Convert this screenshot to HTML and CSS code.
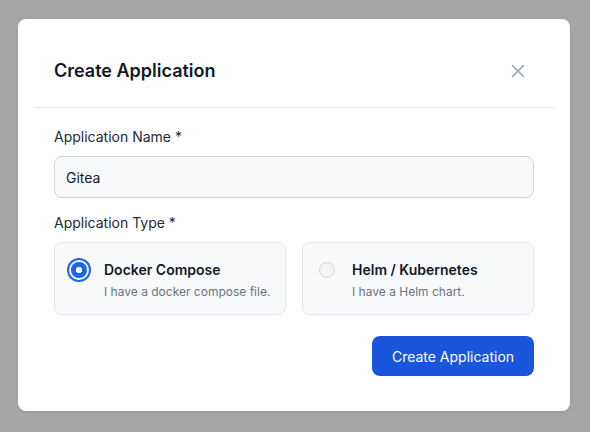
FILE: index.html
```html
<!DOCTYPE html>
<html lang="en">
<head>
<meta charset="utf-8">
<title>Create Application</title>
<link rel="stylesheet" href="styles.css">
</head>
<body>
<div class="dialog">
  <div class="header">
    <h2 class="title">Create Application</h2>
    <button class="close" aria-label="Close">
      <svg width="14" height="14" viewBox="0 0 14 14" fill="none" stroke="#9ca3af" stroke-width="1.6" stroke-linecap="round"><path d="M1.5 1.5 L12.5 12.5 M12.5 1.5 L1.5 12.5"/></svg>
    </button>
  </div>
  <div class="divider"></div>
  <div class="body">
    <label class="label">Application Name *</label>
    <div class="input">Gitea</div>
    <label class="label type-label">Application Type *</label>
    <div class="options">
      <div class="card">
        <span class="radio checked"></span>
        <div class="card-text">
          <div class="card-title">Docker Compose</div>
          <div class="card-desc">I have a docker compose file.</div>
        </div>
      </div>
      <div class="card">
        <span class="radio"></span>
        <div class="card-text">
          <div class="card-title">Helm / Kubernetes</div>
          <div class="card-desc">I have a Helm chart.</div>
        </div>
      </div>
    </div>
    <div class="actions">
      <button class="primary">Create Application</button>
    </div>
  </div>
</div>
</body>
</html>
```
FILE: styles.css
```css
* { box-sizing: border-box; }
html, body { margin: 0; padding: 0; }
body {
  background: #a6a6a6;
  font-family: Inter, "Noto Sans", sans-serif;
  width: 590px;
  height: 432px;
  padding: 19px 20px 0 18px;
}
.dialog {
  width: 552px;
  height: 392px;
  background: #ffffff;
  border-radius: 8px;
  box-shadow: 0 1px 3px rgba(0,0,0,0.12);
}
.header {
  display: flex;
  align-items: center;
  justify-content: space-between;
  height: 88px;
  padding: 38px 36px 22px 36px;
}
.title {
  margin: 0;
  font-size: 18px;
  line-height: 28px;
  font-weight: 600;
  color: #111827;
}
.close {
  width: 32px;
  height: 28px;
  border: 0;
  background: transparent;
  padding: 0;
  display: flex;
  align-items: center;
  justify-content: center;
}
.divider {
  height: 1px;
  background: #e5e7eb;
  margin: 0 16px;
}
.body {
  padding: 19px 36px 35px 36px;
}
.label {
  display: block;
  font-size: 14px;
  line-height: 20px;
  color: #1f2937;
  margin-bottom: 9px;
}
.type-label { margin-top: 15px; }
.input {
  height: 42px;
  border: 1px solid #d1d5db;
  border-radius: 8px;
  background: #f9fafb;
  padding: 0 11px;
  display: flex;
  align-items: center;
  font-size: 14px;
  color: #111827;
}
.options {
  display: grid;
  grid-template-columns: 1fr 1fr;
  gap: 16px;
}
.card {
  display: flex;
  align-items: flex-start;
  gap: 17px;
  height: 73px;
  padding: 19px 8px 0 16px;
  border: 1px solid #e5e7eb;
  border-radius: 8px;
  background: #f9fafb;
}
.radio {
  flex: none;
  width: 16px;
  height: 16px;
  border-radius: 50%;
  border: 1px solid #d1d5db;
  background: #f3f4f6;
}
.radio.checked {
  border: 0;
  background: radial-gradient(circle, #ffffff 0 3px, #1c64f2 3.5px);
  box-shadow: 0 0 0 2px #ffffff, 0 0 0 4px #1c64f2;
}
.card-text { white-space: nowrap; }
.card-title {
  font-size: 14px;
  line-height: 20px;
  font-weight: 600;
  color: #111827;
  margin-top: -2px;
}
.card-desc {
  margin-top: 4px;
  font-size: 12px;
  line-height: 16px;
  color: #6b7280;
}
.actions {
  display: flex;
  justify-content: flex-end;
  margin-top: 21px;
}
.primary {
  width: 162px;
  height: 40px;
  border: 0;
  border-radius: 8px;
  background: #1a56db;
  color: #ffffff;
  font-family: Inter, "Noto Sans", sans-serif;
  font-size: 14px;
  font-weight: 400;
}
```
